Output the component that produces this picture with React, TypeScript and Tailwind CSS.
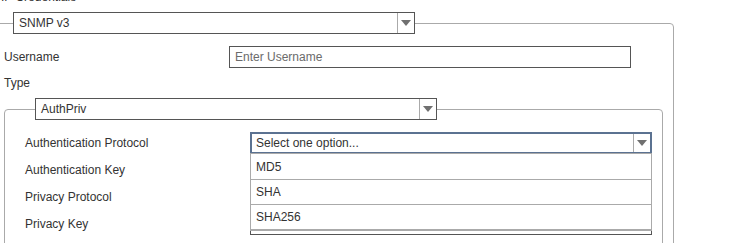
import React from 'react';

const font = { fontFamily: '"Liberation Sans", Arial, sans-serif' };

function Arrow() {
  return (
    <div className="w-[17px] h-full border-l border-[#aaa] flex items-center justify-center shrink-0">
      <svg width="10" height="6" viewBox="0 0 10 6">
        <path d="M0 0H10L5 6Z" fill="#707070" />
      </svg>
    </div>
  );
}

function SelectBox({ value }: { value: string }) {
  return (
    <div className="h-[22px] w-[402px] border border-[#555] bg-white flex items-center">
      <span className="flex-1 pl-[5px] text-[12px] text-[#333] truncate">{value}</span>
      <Arrow />
    </div>
  );
}

function TextInput({ placeholder = '' }: { placeholder?: string }) {
  return (
    <div className="h-[22px] w-[402px] border border-[#555] bg-white flex items-center pl-[5px] text-[12px] text-[#6b6b6b]">
      {placeholder}
    </div>
  );
}

const OPTIONS = ['MD5', 'SHA', 'SHA256'];

export default function App() {
  return (
    <div className="w-[741px] h-[243px] overflow-hidden bg-white text-[12px] text-[#333]" style={font}>
      <div className="-mt-[10px]">
        <div className="h-[15px] pl-[1px] leading-[15px]">IP Credentials</div>

        {/* SNMP fieldset */}
        <fieldset className="mt-[7px] ml-[-8px] w-[682px] border border-[#aaa] rounded-[4px] pl-[11px] pr-[10px] pt-[12px] pb-[12px]">
          <legend className="ml-[9px]">
            <SelectBox value="SNMP v3" />
          </legend>

          <div className="grid grid-cols-[225px_402px] items-center h-[22px]">
            <span>Username</span>
            <TextInput placeholder="Enter Username" />
          </div>

          <div className="mt-[7px] h-[16px] leading-[16px]">Type</div>

          {/* AuthPriv fieldset */}
          <fieldset className="mt-[7px] w-[659px] border border-[#aaa] rounded-[4px] pl-[20px] pt-[12px] pb-[12px]">
            <legend className="ml-[10px]">
              <SelectBox value="AuthPriv" />
            </legend>

            <div className="flex flex-col gap-[5px]">
              <div className="grid grid-cols-[225px_402px] items-center h-[22px]">
                <span>Authentication Protocol</span>
                <div className="relative z-10">
                  <div className="h-[22px] w-[402px] border-2 border-[#5b7291] bg-white flex items-center">
                    <span className="flex-1 pl-[4px] text-[12px] text-[#333]">Select one option...</span>
                    <Arrow />
                  </div>
                  <ul className="absolute left-0 top-[21px] w-[402px] bg-white border border-[#aaa] border-b-2 border-b-[#aaa]">
                    {OPTIONS.map((o, i) => (
                      <li
                        key={o}
                        className={`h-[25px] flex items-center pl-[5px] ${i > 0 ? 'border-t border-[#aaa]' : ''}`}
                      >
                        {o}
                      </li>
                    ))}
                  </ul>
                </div>
              </div>
              <div className="grid grid-cols-[225px_402px] items-center h-[22px]">
                <span>Authentication Key</span>
                <TextInput />
              </div>
              <div className="grid grid-cols-[225px_402px] items-center h-[22px]">
                <span>Privacy Protocol</span>
                <TextInput />
              </div>
              <div className="grid grid-cols-[225px_402px] items-center h-[22px]">
                <span>Privacy Key</span>
                <TextInput />
              </div>
            </div>
          </fieldset>
        </fieldset>
      </div>
    </div>
  );
}
